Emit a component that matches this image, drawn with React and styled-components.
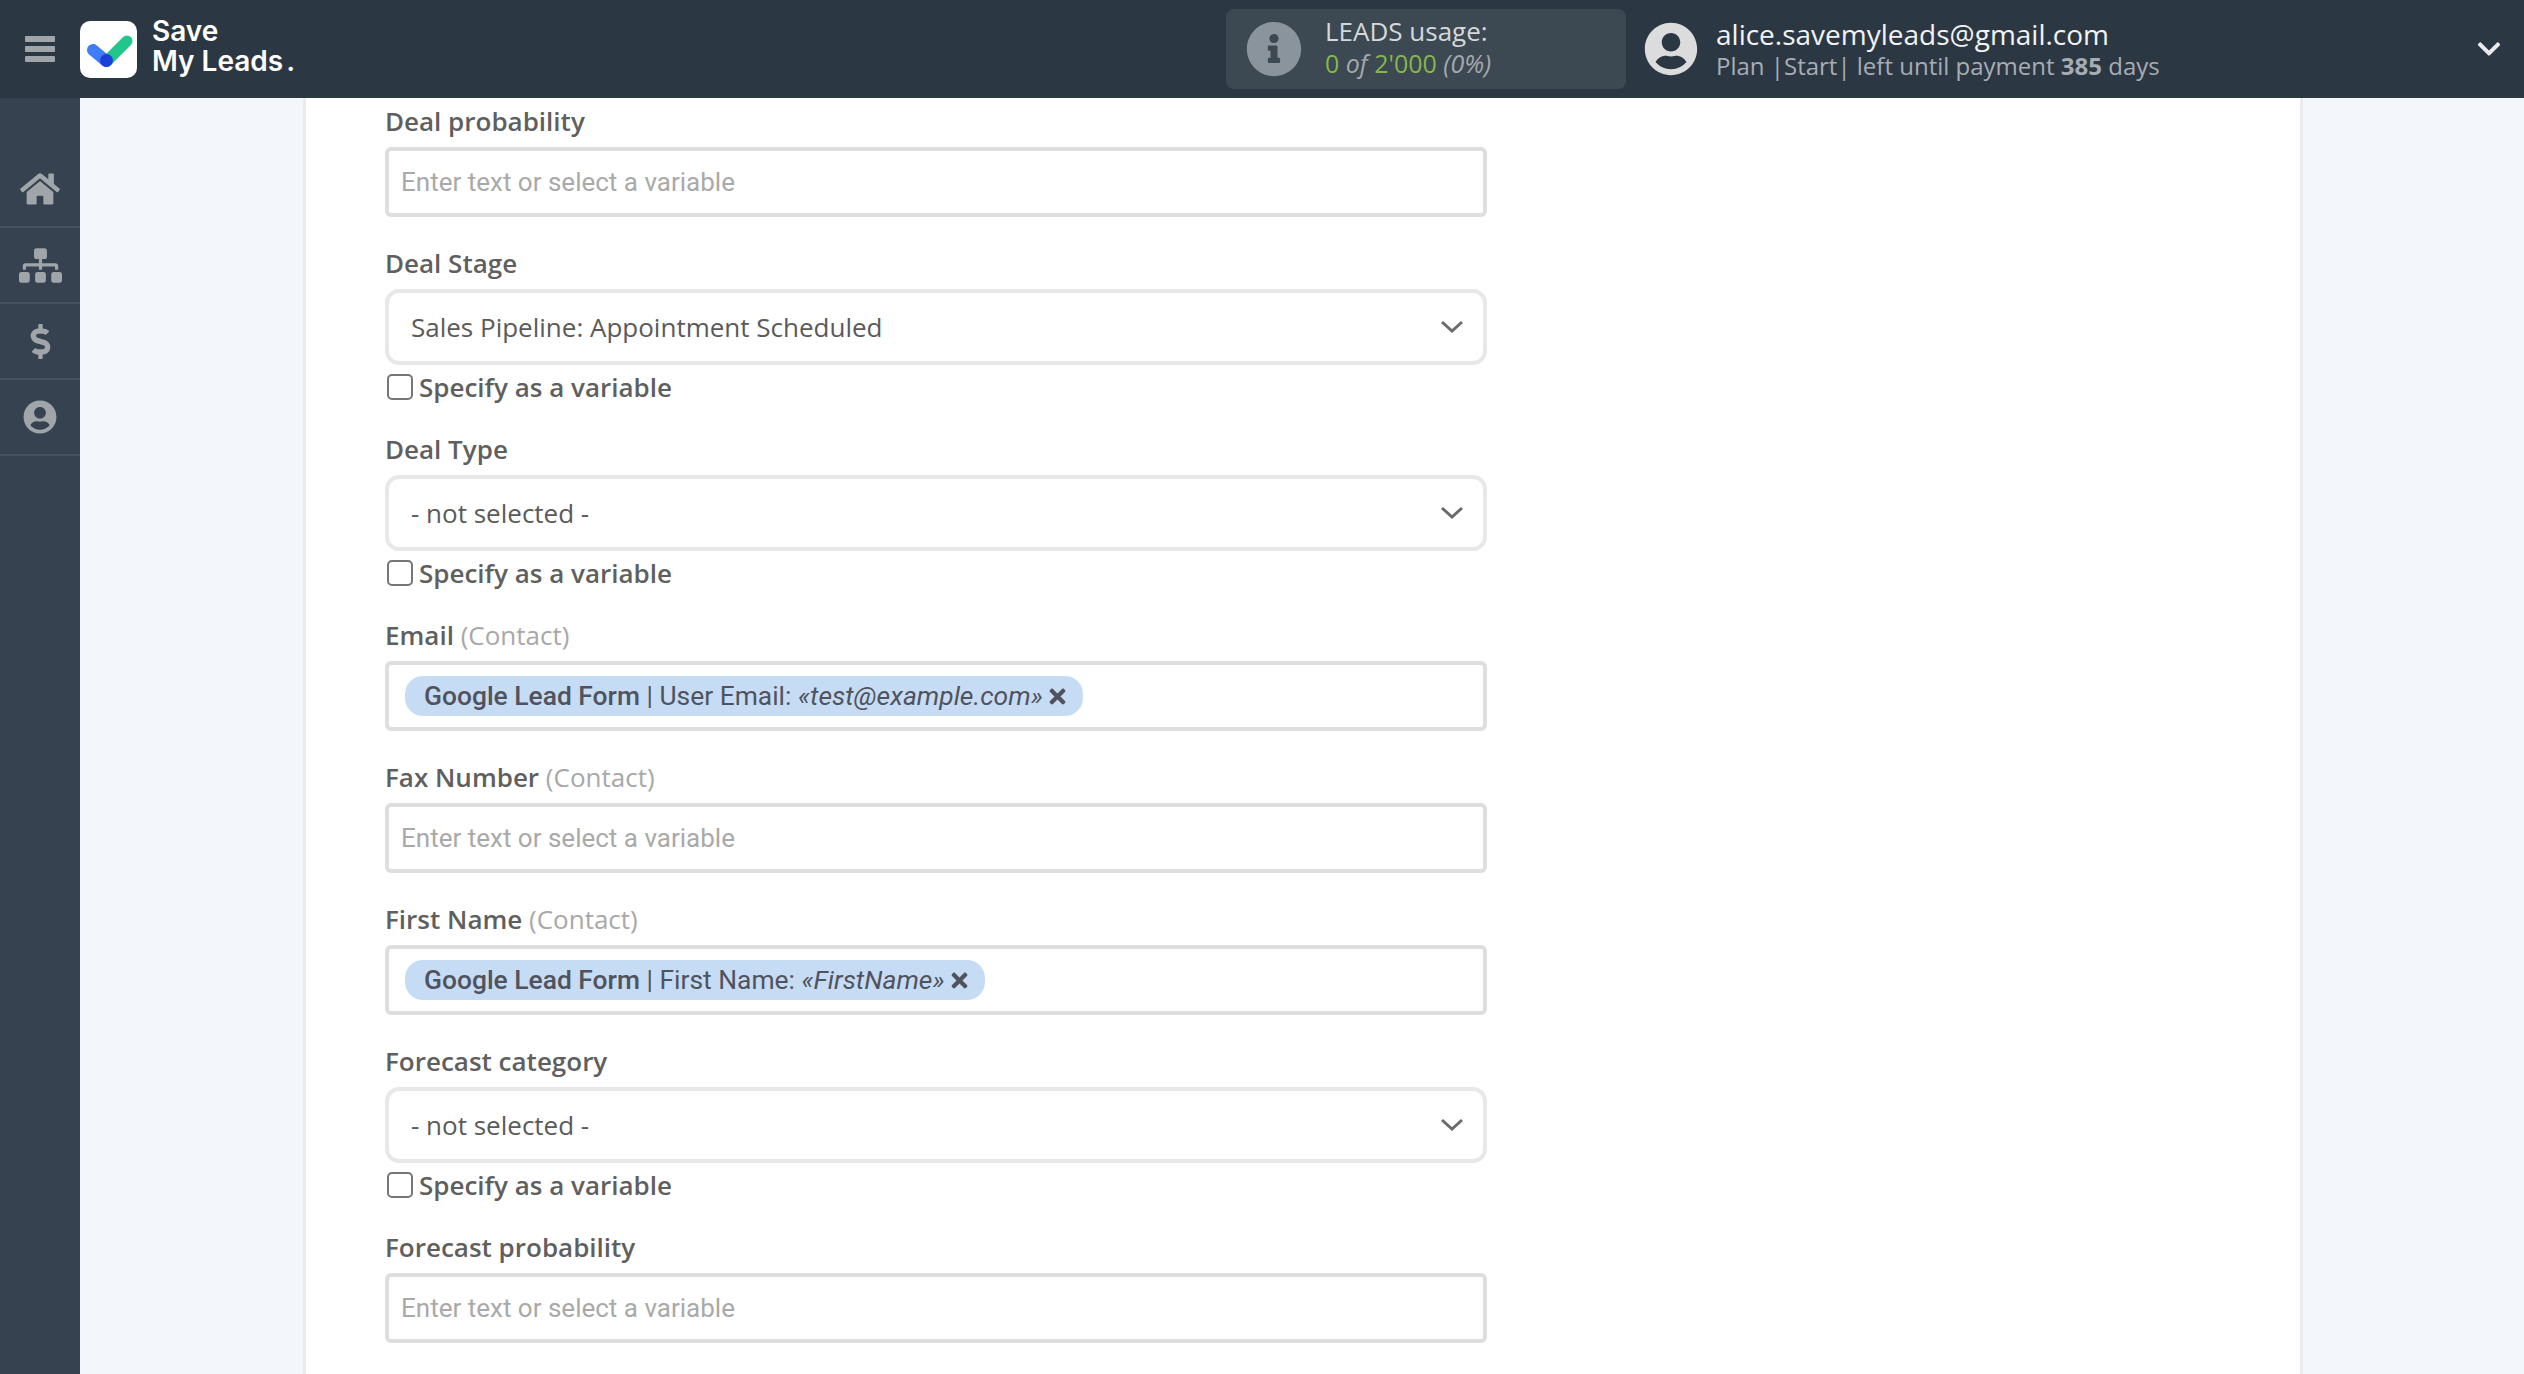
import { createGlobalStyle } from "styled-components";
import styled from "styled-components";
import { FaChevronDown, FaDollarSign, FaHome, FaInfoCircle, FaSitemap, FaTimes, FaUserCircle } from "react-icons/fa";

const fields = [
  { type: "input", label: "Deal probability" },
  { type: "select", label: "Deal Stage", value: "Sales Pipeline: Appointment Scheduled" },
  { type: "select", label: "Deal Type", value: "- not selected -" },
  { type: "chip", label: "Email", hint: "(Contact)", source: "Google Lead Form", name: "User Email:", sample: "«test@example.com»" },
  { type: "input", label: "Fax Number", hint: "(Contact)" },
  { type: "chip", label: "First Name", hint: "(Contact)", source: "Google Lead Form", name: "First Name:", sample: "«FirstName»" },
  { type: "select", label: "Forecast category", value: "- not selected -" },
  { type: "input", label: "Forecast probability" },
];

const App = () => {
  return (
    <Page>
      <GlobalStyle />
      <Header>
        <MenuIcon viewBox="0 0 30 26">
          <rect x="0" y="0" width="30" height="6" rx="1" />
          <rect x="0" y="10" width="30" height="6" rx="1" />
          <rect x="0" y="20" width="30" height="6" rx="1" />
        </MenuIcon>
        <LogoBox>
          <svg width="57" height="57" viewBox="0 0 57 57">
            <line x1="13" y1="29" x2="26" y2="40" stroke="#3f7cf8" strokeWidth="12" strokeLinecap="round" />
            <line x1="27" y1="40" x2="47" y2="20" stroke="#22c68c" strokeWidth="11" strokeLinecap="round" />
            <circle cx="26.5" cy="39.5" r="6.5" fill="#1d3fd8" />
          </svg>
        </LogoBox>
        <LogoText>
          Save
          <br />
          My Leads<LogoDot>.</LogoDot>
        </LogoText>
        <UsageBox>
          <FaInfoCircle size={56} color="#8a949c" />
          <UsageText>
            <UsageTitle>LEADS usage:</UsageTitle>
            <UsageLine>
              <Green>0</Green> <i>of</i> <Green>2'000</Green> <i>(0%)</i>
            </UsageLine>
          </UsageText>
        </UsageBox>
        <FaUserCircle size={54} color="#dcdcdc" />
        <Account>
          <Email>alice.savemyleads@gmail.com</Email>
          <Plan>
            Plan |Start| left until payment <b>385</b> days
          </Plan>
        </Account>
        <HeaderChevron>
          <FaChevronDown size={26} color="#e8eaec" />
        </HeaderChevron>
      </Header>
      <Body>
        <Sidebar>
          <NavItem><FaHome size={40} /></NavItem>
          <NavItem><FaSitemap size={43} /></NavItem>
          <NavItem><FaDollarSign size={35} /></NavItem>
          <NavItem><FaUserCircle size={34} /></NavItem>
        </Sidebar>
        <Main>
          <Card>
            <Form>
              {fields.map((field) => (
                <Field key={field.label} $type={field.type}>
                  <Label>
                    {field.label}
                    {field.hint && <Hint> {field.hint}</Hint>}
                  </Label>
                  {field.type === "input" && (
                    <TextBox>
                      <Placeholder>Enter text or select a variable</Placeholder>
                    </TextBox>
                  )}
                  {field.type === "chip" && (
                    <TextBox>
                      <Chip>
                        <b>{field.source}</b>&nbsp;| {field.name}&nbsp;<i>{field.sample}</i>
                        <ChipClose><FaTimes size={23} /></ChipClose>
                      </Chip>
                    </TextBox>
                  )}
                  {field.type === "select" && (
                    <>
                      <SelectBox>
                        {field.value}
                        <svg width="24" height="14" viewBox="0 0 24 14">
                          <path d="M2 2l10 9 10-9" fill="none" stroke="#6b6b6b" strokeWidth="3" />
                        </svg>
                      </SelectBox>
                      <CheckRow>
                        <CheckBox />
                        Specify as a variable
                      </CheckRow>
                    </>
                  )}
                </Field>
              ))}
            </Form>
          </Card>
        </Main>
      </Body>
    </Page>
  );
};

export default App;

const GlobalStyle = createGlobalStyle`
  html, body {
    margin: 0;
    height: 100%;
    overflow: hidden;
  }
  * {
    box-sizing: border-box;
  }
`;

const Page = styled.div`
  width: 2524px;
  height: 1374px;
  display: flex;
  flex-direction: column;
  overflow: hidden;
  font-family: "Open Sans", sans-serif;
`;

const Header = styled.header`
  height: 98px;
  flex: none;
  display: flex;
  align-items: center;
  background: #2c3744;
  color: #fff;
`;

const MenuIcon = styled.svg`
  width: 30px;
  height: 26px;
  margin: 0 25px;
  fill: #a0a5aa;
`;

const LogoBox = styled.div`
  width: 57px;
  height: 57px;
  border-radius: 10px;
  background: #fff;
  flex: none;
`;

const LogoText = styled.div`
  width: 1074px;
  margin: -6px 0 0 15px;
  font-family: Inter, sans-serif;
  font-size: 28px;
  font-weight: 600;
  line-height: 30px;
`;

const LogoDot = styled.span`
  margin-left: 3px;
`;

const UsageBox = styled.div`
  width: 400px;
  height: 80px;
  margin-right: 18px;
  padding-left: 20px;
  display: flex;
  align-items: center;
  gap: 23px;
  border-radius: 8px;
  background: #3c4852;
`;

const UsageText = styled.div`
  display: flex;
  flex-direction: column;
  gap: 2px;
  margin-top: -5px;
  font-size: 25px;
  line-height: 30px;
`;

const UsageTitle = styled.div`
  font-size: 26px;
  color: #d5d8da;
`;

const UsageLine = styled.div`
  color: #a4a9ad;
`;

const Green = styled.span`
  color: #84b84a;
`;

const Account = styled.div`
  margin: -2px 0 0 18px;
`;

const Email = styled.div`
  font-size: 28px;
  line-height: 36px;
  color: #f2f2f2;
`;

const Plan = styled.div`
  margin-top: -1px;
  font-size: 24px;
  line-height: 30px;
  color: #a7adb3;
`;

const HeaderChevron = styled.div`
  margin-left: auto;
  margin-right: 22px;
  display: flex;
`;

const Body = styled.div`
  flex: 1;
  display: flex;
  min-height: 0;
`;

const Sidebar = styled.nav`
  width: 80px;
  flex: none;
  padding-top: 54px;
  background: #36424f;
  color: #a0a5aa;
`;

const NavItem = styled.div`
  height: 76px;
  display: flex;
  align-items: center;
  justify-content: center;
  border-bottom: 2px solid #46525f;
`;

const Main = styled.main`
  flex: 1;
  padding: 0 221px 0 223px;
  background: #f3f7fc;
`;

const Card = styled.div`
  height: 100%;
  border-left: 3px solid #e9ebee;
  border-right: 3px solid #e9ebee;
  background: #fff;
`;

const Form = styled.div`
  width: 1181px;
  padding: 3px 0 0 79px;
`;

const Field = styled.div`
  margin-bottom: ${(props) => (props.$type === "select" ? "0" : "26px")};
`;

const Label = styled.div`
  height: 40px;
  margin-bottom: 6px;
  font-size: 26px;
  font-weight: 600;
  line-height: 40px;
  color: #5f5f5f;
`;

const Hint = styled.span`
  font-weight: 400;
  color: #a8a8a8;
`;

const TextBox = styled.div`
  height: 70px;
  padding: 0 12px;
  display: flex;
  align-items: center;
  border: 4px solid #dedede;
  border-radius: 6px;
  background: #fff;
  font-family: Roboto, sans-serif;
  font-size: 26px;
`;

const Placeholder = styled.span`
  color: #a9a9a9;
`;

const Chip = styled.div`
  height: 40px;
  margin-left: 4px;
  padding: 0 14px 0 19px;
  display: flex;
  align-items: center;
  border-radius: 18px;
  background: #c6dcf5;
  color: #50535e;
  font-size: 26.4px;
  white-space: pre;

  b {
    font-weight: 500;
  }
`;

const ChipClose = styled.span`
  display: flex;
  margin-left: 3px;
`;

const SelectBox = styled.div`
  height: 76px;
  padding: 0 19px 0 22px;
  display: flex;
  align-items: center;
  justify-content: space-between;
  border: 4px solid #e8e8e8;
  border-radius: 14px;
  font-size: 26px;
  color: #5a5a5a;
`;

const CheckRow = styled.label`
  height: 32px;
  margin: 6px 0 26px;
  display: flex;
  align-items: center;
  gap: 6px;
  font-size: 26px;
  font-weight: 600;
  color: #5f5f5f;
`;

const CheckBox = styled.span`
  width: 26px;
  height: 26px;
  margin-left: 2px;
  flex: none;
  border: 2px solid #767676;
  border-radius: 5px;
  background: #fff;
`;
